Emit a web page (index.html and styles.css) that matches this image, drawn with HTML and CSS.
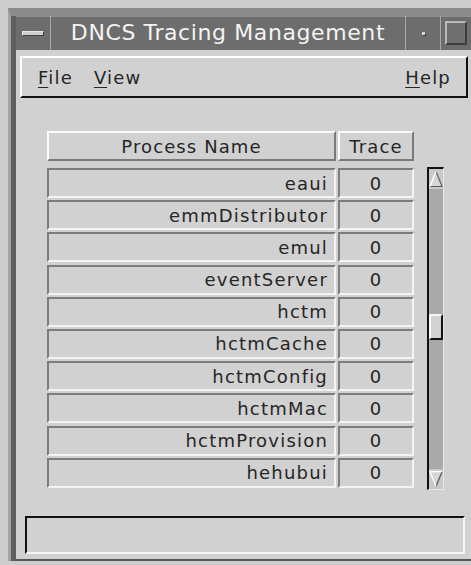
FILE: index.html
```html
<!DOCTYPE html>
<html lang="en">
<head>
<meta charset="utf-8">
<title>DNCS Tracing Management</title>
<link rel="stylesheet" href="styles.css">
</head>
<body>
<div class="window">
  <div class="frame">
    <div class="titlebar">
      <div class="tb-btn tb-menu"><span class="dash"></span></div>
      <div class="tb-title">DNCS Tracing Management</div>
      <div class="tb-btn tb-min"><span class="dot"></span></div>
      <div class="tb-btn tb-max"><span class="sq"></span></div>
    </div>
    <div class="client">
      <div class="menubar">
        <span class="menu"><u>F</u>ile</span>
        <span class="menu"><u>V</u>iew</span>
        <span class="spacer"></span>
        <span class="menu"><u>H</u>elp</span>
      </div>

      <div class="tablewrap">
        <div class="cols">
          <div class="head">
            <div class="hcell">Process Name</div>
            <div class="hcell">Trace</div>
          </div>
          <div class="rows">
            <div class="cell name">eaui</div><div class="cell val">0</div>
            <div class="cell name">emmDistributor</div><div class="cell val">0</div>
            <div class="cell name">emul</div><div class="cell val">0</div>
            <div class="cell name">eventServer</div><div class="cell val">0</div>
            <div class="cell name">hctm</div><div class="cell val">0</div>
            <div class="cell name">hctmCache</div><div class="cell val">0</div>
            <div class="cell name">hctmConfig</div><div class="cell val">0</div>
            <div class="cell name">hctmMac</div><div class="cell val">0</div>
            <div class="cell name">hctmProvision</div><div class="cell val">0</div>
            <div class="cell name">hehubui</div><div class="cell val">0</div>
          </div>
        </div>

        <div class="scroll">
          <div class="arrow">
            <svg width="15" height="20" viewBox="0 0 15 20">
              <polygon points="7.5,2 14,18 1,18" fill="#d6d6d6"/>
              <polyline points="7.5,2 14,18 1,18" fill="none" stroke="#5a5a5a" stroke-width="1.2"/>
              <polyline points="1,18 7.5,2" fill="none" stroke="#ffffff" stroke-width="1.6"/>
            </svg>
          </div>
          <div class="trough top-part"></div>
          <div class="thumb"></div>
          <div class="trough"></div>
          <div class="arrow">
            <svg width="15" height="20" viewBox="0 0 15 20">
              <polygon points="1,2 14,2 7.5,18" fill="#d6d6d6"/>
              <polyline points="14,2 7.5,18" fill="none" stroke="#5a5a5a" stroke-width="1.4"/>
              <polyline points="7.5,18 1,2 14,2" fill="none" stroke="#ffffff" stroke-width="1.4"/>
            </svg>
          </div>
        </div>
      </div>

      <div class="status"></div>
    </div>
  </div>
</div>
</body>
</html>
```

FILE: styles.css
```css
html, body {
  margin: 0;
  height: 100%;
}

body {
  background: #cdcdcd;
  overflow: hidden;
  font-family: "DejaVu Sans", "Liberation Sans", sans-serif;
  color: #262626;
}

/* outer window frame */
.window {
  margin: 8px 0 0 8px;
  width: 463px;
  box-sizing: border-box;
  border-top: 8px solid #8b8b8b;
  border-left: 3px solid #a3a3a3;
}

.frame {
  border-left: 5px solid #5e5e5e;
}

/* title bar */
.titlebar {
  height: 34px;
  background: #6d6d6d;
  display: flex;
  box-shadow: inset 0 1px 0 #8e8e8e;
}

.tb-btn {
  display: flex;
  align-items: center;
  justify-content: center;
}

.tb-menu {
  width: 34px;
  border-right: 1px solid #a9a9a9;
}

.dash {
  width: 20px;
  height: 3px;
  background: #cfcfcf;
  border: 1px solid #3f3f3f;
  border-top-color: #e8e8e8;
  border-left-color: #e8e8e8;
}

.tb-title {
  flex: 1;
  text-align: center;
  color: #f3f3f3;
  font-size: 22px;
  line-height: 34px;
  letter-spacing: 0.6px;
}

.tb-min {
  width: 34px;
  border-left: 1px solid #a9a9a9;
}

.dot {
  width: 3px;
  height: 3px;
  background: #d8d8d8;
  box-shadow: 1px 1px 0 #3a3a3a;
}

.tb-max {
  width: 30px;
  border-left: 1px solid #a9a9a9;
}

.sq {
  width: 18px;
  height: 20px;
  border: 2px solid #3d3d3d;
  border-top-color: #b9b9b9;
  border-left-color: #b9b9b9;
  background: #707070;
}

/* client area */
.client {
  height: 511px;
  box-sizing: border-box;
  background: #d1d1d1;
  border-bottom: 2px solid #555555;
  padding-top: 6px;
  display: flex;
  flex-direction: column;
}

.menubar {
  margin: 0 3px 0 4px;
  height: 42px;
  box-sizing: border-box;
  border: 2px solid #111111;
  border-top-color: #ffffff;
  border-left-color: #ffffff;
  display: flex;
  align-items: center;
  padding: 0 15px 0 16px;
  gap: 21px;
  font-size: 18px;
  letter-spacing: 1.2px;
}

.menu u {
  text-underline-offset: 3px;
}

.spacer {
  flex: 1;
}

/* table */
.tablewrap {
  display: flex;
  gap: 13px;
  margin: 33px 0 0 31px;
}

.cols {
  display: flex;
  flex-direction: column;
}

.head,
.rows {
  display: grid;
  grid-template-columns: 289px 76px;
  column-gap: 2px;
}

.head {
  height: 30px;
  margin-bottom: 7px;
}

.rows {
  grid-auto-rows: 30px;
  row-gap: 2.2px;
}

.hcell {
  box-sizing: border-box;
  border: 2px solid #7a7a7a;
  border-top-color: #fbfbfb;
  border-left-color: #fbfbfb;
  display: flex;
  align-items: center;
  justify-content: center;
  font-size: 18px;
  letter-spacing: 1.1px;
}

.cell {
  box-sizing: border-box;
  border: 2px solid #f4f4f4;
  border-top-color: #7c7c7c;
  border-left-color: #7c7c7c;
  display: flex;
  align-items: center;
  font-size: 18px;
  letter-spacing: 1.2px;
}

.name {
  justify-content: flex-end;
  padding-right: 6px;
}

.val {
  justify-content: center;
}

/* scroll bar */
.scroll {
  margin-top: 36px;
  width: 17px;
  height: 323px;
  box-sizing: border-box;
  border-top: 2px solid #111111;
  border-left: 2px solid #111111;
  border-right: 1px solid #e6e6e6;
  border-bottom: 1px solid #e6e6e6;
  display: flex;
  flex-direction: column;
  background: #a9a9a9;
}

.arrow {
  height: 20px;
  background: #c9c9c9;
  display: flex;
  justify-content: center;
}

.trough {
  flex: 1;
}

.top-part {
  flex: 0 0 125px;
}

.thumb {
  height: 26px;
  box-sizing: border-box;
  background: #d3d3d3;
  border: 2px solid #111111;
  border-top-color: #f6f6f6;
  border-left-color: #f6f6f6;
}

/* status line */
.status {
  margin: 26px 0 0 9px;
  width: 440px;
  height: 38px;
  box-sizing: border-box;
  border: 2px solid #f6f6f6;
  border-top-color: #111111;
  border-left-color: #111111;
}
```
